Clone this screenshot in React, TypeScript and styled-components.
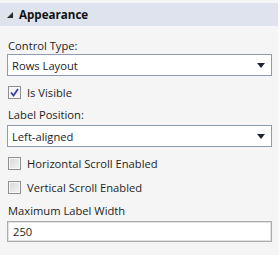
import React, { useState } from "react";
import styled, { createGlobalStyle } from "styled-components";

const GlobalStyle = createGlobalStyle`
  html, body {
    margin: 0;
    padding: 0;
    background: #fbfbfb;
  }
  body {
    font-family: "Open Sans", "Noto Sans", sans-serif;
    font-size: 11.2px;
    color: #1e1e1e;
  }
`;

const Panel = styled.div`
  width: 278px;
  height: 255px;
  background-color: #f5f5f5;
  padding-top: 3px;
  box-sizing: border-box;
`;

const Header = styled.div`
  height: 23px;
  display: flex;
  align-items: center;
  background-color: #dee3ed;
  padding-left: 7px;
  gap: 6px;
`;

const HeaderTitle = styled.span`
  font-weight: 700;
  font-size: 11.6px;
  color: #111;
`;

const Body = styled.div`
  display: flex;
  flex-direction: column;
  padding: 0 6px 0 7px;
`;

const Label = styled.div<{ $top: number }>`
  margin-top: ${(p) => p.$top}px;
  height: 16px;
  line-height: 16px;
  padding-left: 1px;
  color: #1e1e1e;
`;

const Combo = styled.div<{ $top: number }>`
  margin-top: ${(p) => p.$top}px;
  height: 22px;
  box-sizing: border-box;
  border: 1px solid #8e9bb1;
  background: #fff;
  display: flex;
  align-items: center;
  justify-content: space-between;
  padding: 0 6px 0 4px;
  color: #1e1e1e;
`;

const TextBox = styled.input<{ $top: number }>`
  margin-top: ${(p) => p.$top}px;
  height: 21px;
  box-sizing: border-box;
  border: 1px solid #ababab;
  box-shadow: inset 0 0 0 1px #e2e2e2;
  background: #fff;
  padding: 0 5px;
  font-family: inherit;
  font-size: inherit;
  color: #1e1e1e;
  outline: none;
`;

const CheckRow = styled.label<{ $top: number }>`
  margin-top: ${(p) => p.$top}px;
  height: 20px;
  display: flex;
  align-items: center;
  gap: 6px;
  padding-left: 1px;
  cursor: default;
`;

const Box = styled.span<{ $on: boolean }>`
  width: 13px;
  height: 13px;
  box-sizing: border-box;
  border: 1px solid #8f8f8f;
  background: ${(p) =>
    p.$on ? "#f4f4f8" : "linear-gradient(135deg, #d8d8d8 0%, #f4f4f4 100%)"};
  box-shadow: inset 0 0 0 1px #f7f7f7;
  display: flex;
  align-items: center;
  justify-content: center;
`;

const Arrow = () => (
  <svg width="8" height="5" viewBox="0 0 8 5">
    <path d="M0 0 H8 L4 5 Z" fill="#1b2536" />
  </svg>
);

const Expander = () => (
  <svg width="6" height="6" viewBox="0 0 6 6">
    <path d="M6 0 V6 H0 Z" fill="#2b2b2b" />
  </svg>
);

function Check({ label, checked, top }: { label: string; checked?: boolean; top: number }) {
  const [on, setOn] = useState(!!checked);
  return (
    <CheckRow $top={top} onClick={() => setOn(!on)}>
      <Box $on={on}>
        {on && (
          <svg width="9" height="9" viewBox="0 0 9 9">
            <path d="M1 4.5 L3.5 7.5 L8 1" stroke="#3a3f9e" strokeWidth="1.8" fill="none" />
          </svg>
        )}
      </Box>
      <span>{label}</span>
    </CheckRow>
  );
}

export default function App() {
  return (
    <>
      <GlobalStyle />
      <Panel>
        <Header>
          <Expander />
          <HeaderTitle>Appearance</HeaderTitle>
        </Header>
        <Body>
          <Label $top={12}>Control Type:</Label>
          <Combo $top={0}>
            <span>Rows Layout</span>
            <Arrow />
          </Combo>
          <Check label="Is Visible" checked top={6} />
          <Label $top={5}>Label Position:</Label>
          <Combo $top={2}>
            <span>Left-aligned</span>
            <Arrow />
          </Combo>
          <Check label="Horizontal Scroll Enabled" top={6} />
          <Check label="Vertical Scroll Enabled" top={4} />
          <Label $top={6}>Maximum Label Width</Label>
          <TextBox $top={2} defaultValue="250" />
        </Body>
      </Panel>
    </>
  );
}
